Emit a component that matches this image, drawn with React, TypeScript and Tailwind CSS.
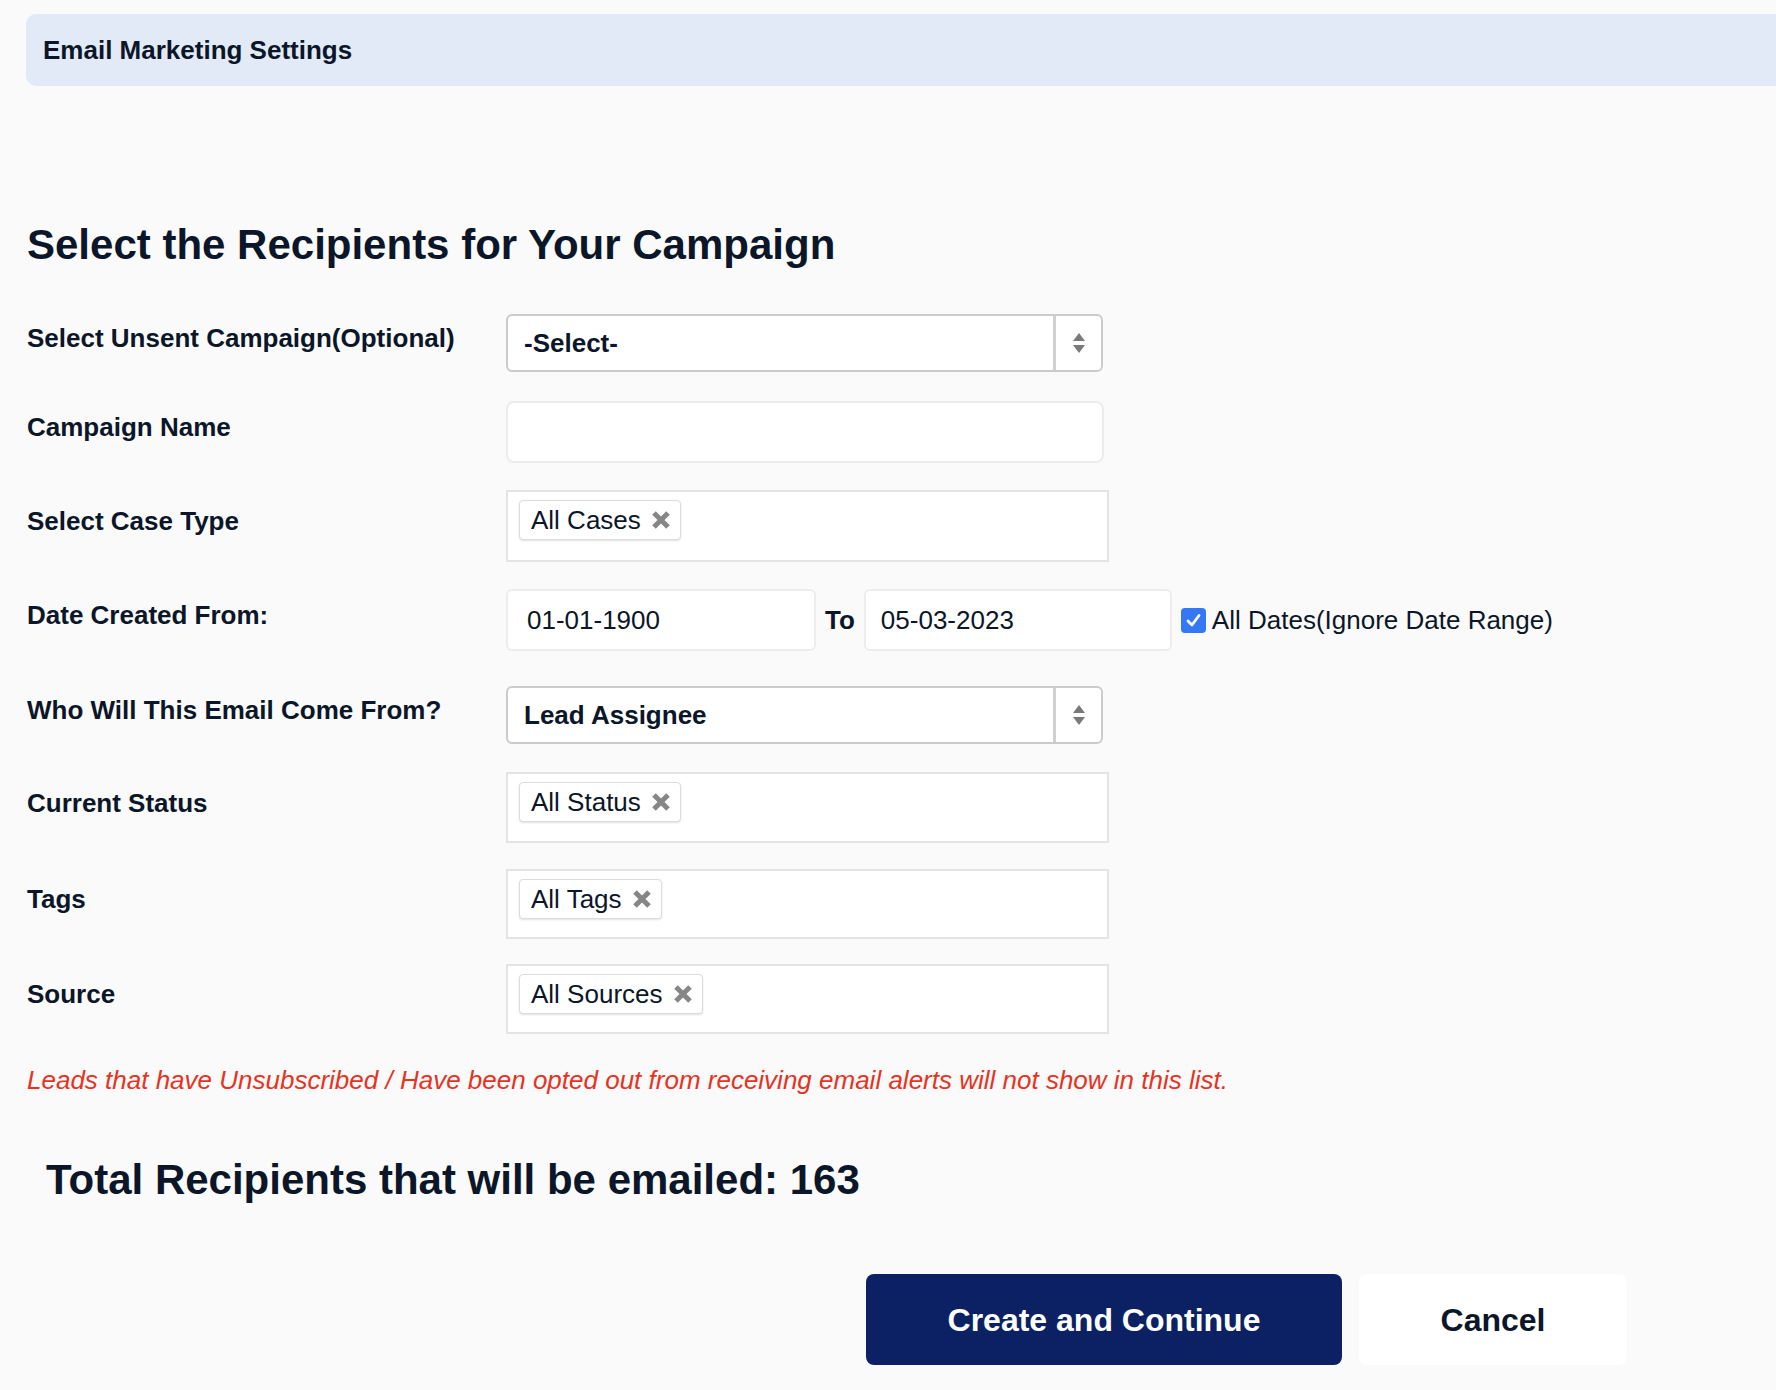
import React from 'react';

const RemoveIcon: React.FC = () => (
  <svg width="20" height="20" viewBox="0 0 20 20" className="shrink-0">
    <path d="M3 3 L17 17 M17 3 L3 17" stroke="#868686" strokeWidth="5" strokeLinecap="butt" />
  </svg>
);

const Tag: React.FC<{ label: string }> = ({ label }) => (
  <div className="inline-flex h-[40px] items-center gap-[10px] rounded-[4px] border border-[#dcdcdc] bg-white pl-[11px] pr-[9px] shadow-[0_1px_2px_rgba(0,0,0,0.12)]">
    <span className="text-[26px] leading-none">{label}</span>
    <RemoveIcon />
  </div>
);

const TagBox: React.FC<{ label: string; height: string }> = ({ label, height }) => (
  <div className={`w-[603px] ${height} border-2 border-[#e4e4e4] bg-white pl-[11px] pt-[8px]`}>
    <Tag label={label} />
  </div>
);

const SelectBox: React.FC<{ value: string }> = ({ value }) => (
  <div className="flex h-[58px] w-[597px] items-stretch rounded-[6px] border-2 border-[#cbcbcb] bg-white">
    <div className="flex flex-1 items-center pl-[16px] text-[26px] font-bold leading-none">{value}</div>
    <div className="flex w-[48px] items-center justify-center border-l-[3px] border-[#d0d0d0]">
      <svg width="14" height="24" viewBox="0 0 14 24">
        <path d="M7 2 L13 10 L1 10 Z" fill="#7a7a7a" />
        <path d="M1 14 L13 14 L7 22 Z" fill="#7a7a7a" />
      </svg>
    </div>
  </div>
);

const Row: React.FC<{ label: string; className?: string; children: React.ReactNode }> = ({ label, className, children }) => (
  <div className={`flex items-center ${className ?? ''}`}>
    <div className="w-[479px] shrink-0 pb-[10px] text-[26px] font-bold leading-none">{label}</div>
    {children}
  </div>
);

export default function App() {
  return (
    <div className="min-h-[1390px] overflow-hidden bg-[#fafafa] font-['Liberation_Sans',Arial,sans-serif] text-[#0b1628]">
      {/* Page header */}
      <div className="pl-[26px] pt-[14px]">
        <div className="flex h-[72px] items-center rounded-l-[10px] bg-[#e2eaf7] pl-[17px] text-[26px] font-bold">
          Email Marketing Settings
        </div>
      </div>

      <div className="pl-[27px]">
        <h1 className="mt-[138px] text-[42px] font-bold leading-none">Select the Recipients for Your Campaign</h1>

        <Row label="Select Unsent Campaign(Optional)" className="mt-[48px]">
          <SelectBox value="-Select-" />
        </Row>

        <Row label="Campaign Name" className="mt-[29px]">
          <div className="h-[62px] w-[598px] rounded-[8px] border-2 border-[#ececec] bg-white"></div>
        </Row>

        <Row label="Select Case Type" className="mt-[27px]">
          <TagBox label="All Cases" height="h-[72px]" />
        </Row>

        <Row label="Date Created From:" className="mt-[27px]">
          <div className="flex items-center">
            <div className="flex h-[62px] w-[310px] items-center rounded-[6px] border-2 border-[#ededed] bg-white pl-[19px] text-[26px] leading-none">
              01-01-1900
            </div>
            <span className="mx-[9px] text-[26px] font-bold leading-none">To</span>
            <div className="flex h-[62px] w-[308px] items-center rounded-[6px] border-2 border-[#ededed] bg-white pl-[15px] text-[26px] leading-none">
              05-03-2023
            </div>
            <div className="ml-[9px] flex h-[25px] w-[25px] items-center justify-center rounded-[4px] bg-[#3478f6]">
              <svg width="17" height="17" viewBox="0 0 17 17">
                <path d="M3 9 L7 13 L14 3.5" stroke="white" strokeWidth="2.8" fill="none" strokeLinecap="round" strokeLinejoin="round" />
              </svg>
            </div>
            <span className="ml-[6px] text-[26px] leading-none">All Dates(Ignore Date Range)</span>
          </div>
        </Row>

        <Row label="Who Will This Email Come From?" className="mt-[35px]">
          <SelectBox value="Lead Assignee" />
        </Row>

        <Row label="Current Status" className="mt-[28px]">
          <TagBox label="All Status" height="h-[71px]" />
        </Row>

        <Row label="Tags" className="mt-[26px]">
          <TagBox label="All Tags" height="h-[70px]" />
        </Row>

        <Row label="Source" className="mt-[25px]">
          <TagBox label="All Sources" height="h-[70px]" />
        </Row>

        <p className="mt-[33px] text-[26px] italic leading-none text-[#e8321f]">
          Leads that have Unsubscribed / Have been opted out from receiving email alerts will not show in this list.
        </p>

        <h2 className="mt-[66px] pl-[19px] text-[42px] font-bold leading-none">Total Recipients that will be emailed: 163</h2>

        <div className="mt-[73px] flex gap-[17px] pl-[839px]">
          <button className="h-[91px] w-[476px] rounded-[8px] bg-[#0b2163] text-[32px] font-bold text-white">
            Create and Continue
          </button>
          <button className="h-[91px] w-[268px] rounded-[8px] bg-white text-[32px] font-bold text-[#0b1628]">
            Cancel
          </button>
        </div>
      </div>
    </div>
  );
}
